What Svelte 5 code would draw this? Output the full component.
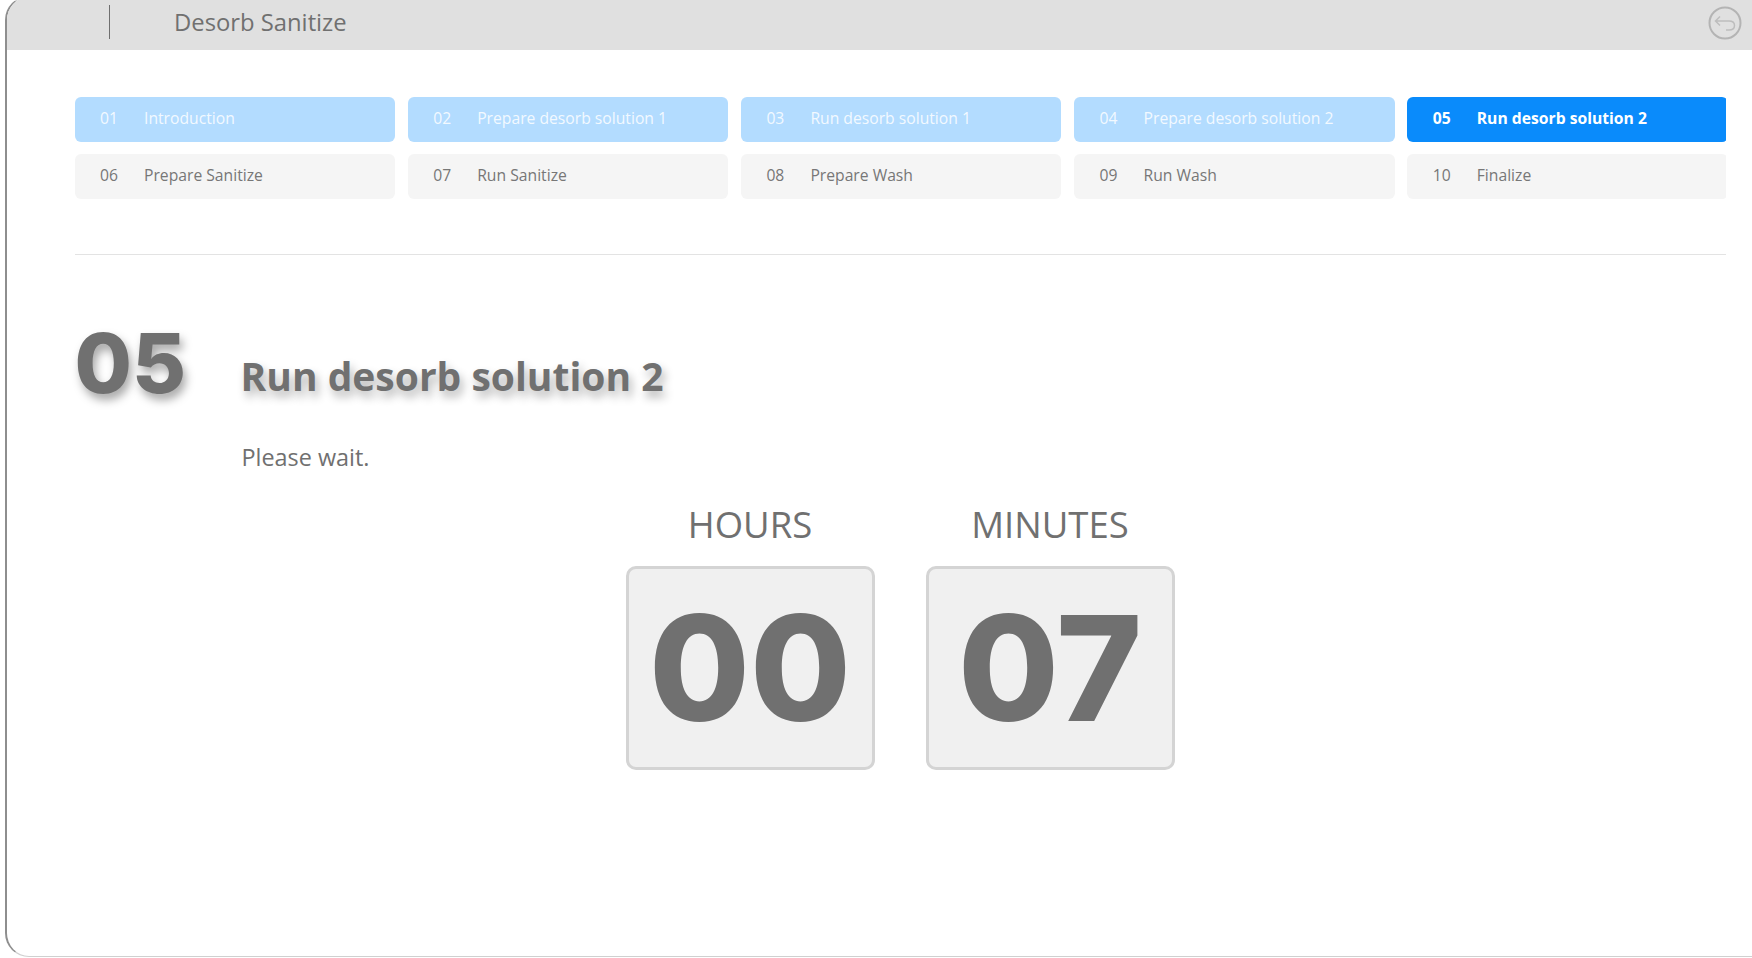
<script>
	const steps = [
		{ no: '01', label: 'Introduction', state: 'done' },
		{ no: '02', label: 'Prepare desorb solution 1', state: 'done' },
		{ no: '03', label: 'Run desorb solution 1', state: 'done' },
		{ no: '04', label: 'Prepare desorb solution 2', state: 'done' },
		{ no: '05', label: 'Run desorb solution 2', state: 'active' },
		{ no: '06', label: 'Prepare Sanitize', state: 'todo' },
		{ no: '07', label: 'Run Sanitize', state: 'todo' },
		{ no: '08', label: 'Prepare Wash', state: 'todo' },
		{ no: '09', label: 'Run Wash', state: 'todo' },
		{ no: '10', label: 'Finalize', state: 'todo' }
	];

	const timers = [
		{ label: 'HOURS', value: '00' },
		{ label: 'MINUTES', value: '07' }
	];
</script>

<div class="frame">
	<header class="topbar">
		<span class="divider"></span>
		<span class="app-title">Desorb Sanitize</span>
		<button class="back" aria-label="Back">
			<svg viewBox="0 0 34 34" width="34" height="34" fill="none">
				<circle cx="17" cy="17" r="15.5" stroke="#b4b4b4" stroke-width="2" />
				<path d="M12 10.5 L7.5 15 L12 19.5 M7.5 15 H21 C24.5 15 26.5 17 26.5 19.5 C26.5 22 24.5 24 21 24 H18" stroke="#bdbdbd" stroke-width="1.5" />
			</svg>
		</button>
	</header>

	<main class="content">
		<div class="steps">
			{#each steps as step}
				<div class="step {step.state}">
					<span class="no">{step.no}</span>
					<span>{step.label}</span>
				</div>
			{/each}
		</div>

		<div class="rule"></div>

		<div class="heading">
			<span class="big-no">05</span>
			<h1>Run desorb solution 2</h1>
		</div>
		<p class="note">Please wait.</p>

		<div class="timers">
			{#each timers as t}
				<div class="timer">
					<div class="timer-label">{t.label}</div>
					<div class="timer-box">{t.value}</div>
				</div>
			{/each}
		</div>
	</main>
</div>

<style>
	:global(body) {
		overflow: hidden;
		background: #fff;
	}

	.frame {
		box-sizing: border-box;
		width: 1780px;
		height: 961px;
		margin: -4px 0 0 5px;
		border: 1px solid #d0d0d0;
		border-left: 2px solid #8e8e8e;
		border-radius: 24px;
		overflow: hidden;
		font-family: 'Open Sans', 'Noto Sans', sans-serif;
		color: #707070;
	}

	.topbar {
		height: 53px;
		background: #e0e0e0;
		display: flex;
		align-items: flex-end;
		position: relative;
		padding-bottom: 6px;
		box-sizing: border-box;
	}

	.divider {
		width: 1px;
		height: 34px;
		background: #6f6f6f;
		margin-left: 102px;
		margin-bottom: 5px;
	}

	.app-title {
		margin-left: 64px;
		font-size: 23.8px;
		line-height: 34px;
		margin-bottom: 5px;
	}

	.back {
		position: absolute;
		left: 1701px;
		top: 9px;
		width: 34px;
		height: 34px;
		padding: 0;
		border: 0;
		background: none;
	}

	.content {
		width: 1651px;
		margin-left: 67.5px;
	}

	/* last column runs past the edge and gets clipped */
	.steps {
		display: grid;
		grid-template-columns: repeat(5, 320.5px);
		gap: 12px 12.7px;
		padding-top: 47px;
		overflow: hidden;
	}

	.step {
		height: 45px;
		border-radius: 6px;
		display: flex;
		align-items: center;
		padding: 0 0 4px 25.5px;
		box-sizing: border-box;
		font-size: 15.7px;
		font-weight: 500;
	}

	.no {
		width: 44px;
	}

	.done {
		background: #b3dcff;
		color: #f2f9ff;
	}

	.active {
		background: #0a8bfb;
		color: #fff;
		font-weight: 700;
	}

	.todo {
		background: #f5f5f5;
		color: #777;
	}

	.rule {
		height: 1px;
		background: #e3e3e3;
		margin-top: 55px;
	}

	.heading {
		display: flex;
		align-items: flex-end;
		margin-top: 52px;
		height: 108px;
	}

	.big-no {
		font-family: Inter, 'Open Sans', sans-serif;
		font-size: 83px;
		font-weight: 800;
		line-height: 104px;
		width: 166px;
		text-shadow: 3px 6px 10px rgba(0, 0, 0, 0.35);
	}

	h1 {
		margin: 0 0 13px;
		font-size: 39px;
		line-height: 52px;
		font-weight: 700;
		text-shadow: 3px 6px 10px rgba(0, 0, 0, 0.3);
	}

	.note {
		margin: 27px 0 0 167px;
		font-size: 23.4px;
		line-height: 30px;
	}

	.timers {
		display: flex;
		justify-content: center;
		gap: 51px;
		margin-top: 29px;
	}

	.timer-label {
		text-align: center;
		font-size: 36.5px;
		line-height: 46px;
		margin-bottom: 19px;
	}

	.timer-box {
		box-sizing: border-box;
		width: 249px;
		height: 204px;
		background: #f0f0f0;
		border: 3px solid #d4d4d4;
		border-radius: 10px;
		display: flex;
		align-items: center;
		justify-content: center;
		font-family: Inter, 'Open Sans', sans-serif;
		font-size: 146px;
		font-weight: 800;
		line-height: 1;
	}
</style>
